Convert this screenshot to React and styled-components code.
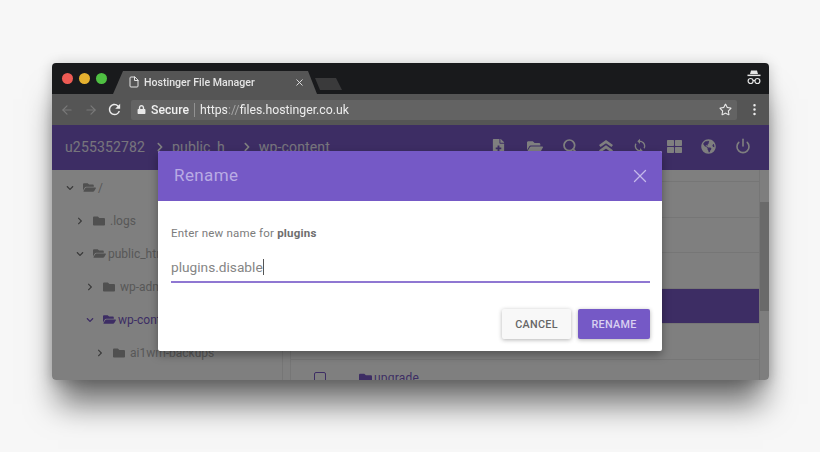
import React from 'react';
import styled, { createGlobalStyle } from 'styled-components';
import {
  FaChevronDown,
  FaChevronRight,
  FaFolder,
  FaFolderOpen,
  FaGlobeAmericas,
  FaLock,
  FaRegStar,
  FaThLarge,
  FaFileMedical,
} from 'react-icons/fa';
import { MdRefresh, MdSync } from 'react-icons/md';
import { FiArrowLeft, FiArrowRight, FiFile, FiPower, FiSearch, FiX, FiMoreVertical } from 'react-icons/fi';

const GlobalStyle = createGlobalStyle`
  html, body {
    margin: 0;
    padding: 0;
    background: #f7f7f7;
    font-family: Roboto, "Liberation Sans", sans-serif;
  }
`;

const Page = styled.div`
  width: 820px;
  height: 452px;
  padding: 63px 0 0 52px;
  box-sizing: border-box;
  overflow: hidden;
`;

const BrowserWindow = styled.div`
  width: 717px;
  height: 317px;
  display: flex;
  flex-direction: column;
  border-radius: 4px;
  overflow: hidden;
  filter: blur(0.4px);
`;

const Shadow = styled.div`
  width: 717px;
  height: 317px;
  border-radius: 4px;
  box-shadow: 0 30px 30px -6px rgba(0, 0, 0, 0.55), 0 2px 14px rgba(0, 0, 0, 0.22);
`;

const TabBar = styled.div`
  height: 31px;
  flex: none;
  display: flex;
  align-items: flex-end;
  padding-left: 10px;
  background: #191a1c;
  position: relative;
`;

const Light = styled.span`
  width: 11px;
  height: 11px;
  border-radius: 50%;
  margin-right: 6px;
  margin-bottom: 10px;
  background: ${({ $color }) => $color};
  flex: none;
`;

const Tab = styled.div`
  width: 204px;
  height: 23px;
  padding: 0 12px 1px 15px;
  box-sizing: border-box;
  display: flex;
  align-items: center;
  background: #555555;
  clip-path: polygon(0 100%, 10px 0, calc(100% - 9px) 0, 100% 100%);
  color: #e4e4e4;
  font-size: 10.6px;
  font-weight: 500;
  flex: none;
`;

const TabTitle = styled.span`
  margin-left: 4px;
  flex: 1;
  white-space: nowrap;
`;

const NewTab = styled.div`
  width: 27px;
  height: 12px;
  margin: 0 0 4px -2px;
  background: #3a3a3b;
  clip-path: polygon(0 0, 21px 0, 100% 100%, 5px 100%);
  flex: none;
`;

const Incognito = styled.svg`
  position: absolute;
  right: 8px;
  top: 7px;
`;

const Toolbar = styled.div`
  height: 31px;
  flex: none;
  display: flex;
  align-items: center;
  padding: 0 0 0 8px;
  background: #555555;
  color: #e8e8e8;
`;

const NavButton = styled.span`
  width: 24px;
  display: flex;
  justify-content: flex-start;
  color: ${({ $dim }) => ($dim ? '#797979' : '#ececec')};
  font-size: 14px;
`;

const ReloadButton = styled(NavButton)`
  margin-left: -2px;
  font-size: 17px;
`;

const Omnibox = styled.div`
  width: 606px;
  height: 20px;
  margin-left: 1px;
  padding: 0 5px 0 6px;
  box-sizing: border-box;
  display: flex;
  align-items: center;
  background: #636363;
  border-radius: 2px;
  font-size: 12.25px;
`;

const Secure = styled.span`
  margin-left: 5px;
  color: #f0f0f0;
  font-weight: 500;
`;

const Divider = styled.span`
  width: 1px;
  height: 14px;
  margin: 0 5px;
  background: #929292;
`;

const Url = styled.span`
  flex: 1;
  color: #ededed;
  white-space: nowrap;
`;

const Dim = styled.span`
  color: #a5a5a5;
`;

const MenuDots = styled.span`
  margin-left: 10px;
  display: flex;
  color: #ececec;
  font-size: 15px;
`;

const AppArea = styled.div`
  flex: 1;
  min-height: 0;
  position: relative;
  display: flex;
  flex-direction: column;
  background: #ffffff;
`;

const AppHeader = styled.div`
  height: 45px;
  flex: none;
  display: flex;
  align-items: flex-start;
  padding: 14px 18px 0 13px;
  box-sizing: border-box;
  background: #7a5bc9;
  color: #ffffff;
`;

const Crumbs = styled.div`
  flex: 1;
  display: flex;
  align-items: center;
  font-size: 14px;
  letter-spacing: 0.15px;
  color: #efeaf9;
`;

const CrumbSep = styled.span`
  display: flex;
  margin: ${({ $margin }) => $margin};
  font-size: 10px;
  color: #ffffff;
`;

const HeaderIcons = styled.div`
  display: grid;
  grid-template-columns: 37px 35px 36px 34px 34px 34px 35px 16px;
  margin-top: -3px;
  height: 20px;
`;

const HeaderIcon = styled.span`
  width: 16px;
  display: flex;
  align-items: center;
  justify-content: center;
  font-size: 15px;
`;

const Tree = styled.div`
  width: 230px;
  flex: none;
  padding-top: 1px;
  border-right: 1px solid #ececec;
`;

const Content = styled.div`
  flex: 1;
  min-height: 0;
  display: flex;
  overflow: hidden;
`;

const TreeRow = styled.div`
  height: 33px;
  display: flex;
  align-items: center;
  padding-left: ${({ $depth }) => 14 + $depth * 10}px;
  font-size: 12px;
  color: ${({ $active }) => ($active ? '#7a5bc9' : '#b0b0b0')};
  white-space: nowrap;
`;

const TreeArrow = styled.span`
  display: flex;
  width: 17px;
  font-size: 8px;
  color: ${({ $active }) => ($active ? '#7a5bc9' : '#777777')};
`;

const TreeFolder = styled.span`
  display: flex;
  margin-right: ${({ $open }) => ($open ? 2 : 5)}px;
  font-size: ${({ $open }) => ($open ? 13 : 12)}px;
  color: ${({ $active }) => ($active ? '#7a5bc9' : '#a0a0a0')};
`;

const Gutter = styled.div`
  width: 7px;
  flex: none;
  background: #ffffff;
  border-right: 1px solid #ececec;
`;

const List = styled.div`
  flex: 1;
  padding-top: 11px;
`;

const ListRow = styled.div`
  height: 35.5px;
  box-sizing: border-box;
  display: flex;
  align-items: center;
  padding: 3px 0 0 23px;
  border-top: 1px solid #ececec;
  background: ${({ $selected }) => ($selected ? '#7a5bc9' : 'transparent')};
  color: #7a5bc9;
  font-size: 12px;
  letter-spacing: 0.2px;
`;

const Checkbox = styled.span`
  width: 10px;
  height: 10px;
  border: 1.5px solid #7a5bc9;
  border-radius: 2px;
  flex: none;
`;

const RowFolder = styled.span`
  display: flex;
  margin: 0 2px 0 33px;
  font-size: 13px;
`;

const ScrollTrack = styled.div`
  width: 10px;
  flex: none;
  padding-top: 32px;
  background: #fdfdfd;
  border-left: 1px solid #ececec;
  box-sizing: border-box;
`;

const ScrollThumb = styled.div`
  height: 109px;
  background: #d4d4d4;
`;

const Overlay = styled.div`
  position: absolute;
  inset: 0;
  display: flex;
  justify-content: center;
  align-items: center;
  background: rgba(0, 0, 0, 0.5);
`;

const Modal = styled.div`
  width: 504px;
  height: 200px;
  margin: -3px 1px 0 0;
  display: flex;
  flex-direction: column;
  background: #ffffff;
  border-radius: 2px;
  box-shadow: 0 4px 10px rgba(0, 0, 0, 0.35);
  overflow: hidden;
`;

const ModalHeader = styled.div`
  height: 50px;
  flex: none;
  display: flex;
  align-items: center;
  justify-content: space-between;
  padding: 0 11px 2px 16px;
  box-sizing: border-box;
  background: #7559c6;
`;

const ModalTitle = styled.h2`
  margin: 0;
  font-size: 17px;
  font-weight: 400;
  letter-spacing: 0.4px;
  color: #b9abe4;
`;

const CloseButton = styled.span`
  display: flex;
  margin-top: 2px;
  font-size: 22px;
  color: #c4b8ea;
`;

const ModalBody = styled.div`
  flex: 1;
  display: flex;
  flex-direction: column;
  padding: 25px 12px 12px 13px;
`;

const Prompt = styled.p`
  margin: 0;
  font-size: 11.5px;
  line-height: 14px;
  letter-spacing: 0.2px;
  color: #7c7c7c;

  b {
    font-weight: 700;
    color: #6e6e6e;
  }
`;

const InputValue = styled.div`
  margin-top: 15px;
  height: 28px;
  box-sizing: border-box;
  display: flex;
  align-items: flex-start;
  padding-top: 4px;
  border-bottom: 2px solid #8f77d2;
  font-size: 13.7px;
  line-height: 17px;
  color: #858585;
`;

const Caret = styled.span`
  width: 1px;
  height: 16px;
  background: #555555;
`;

const Actions = styled.div`
  margin-top: auto;
  display: flex;
  justify-content: flex-end;
  gap: 7px;
`;

const Button = styled.button`
  width: ${({ $width }) => $width}px;
  height: 30px;
  padding: 0;
  border: none;
  border-radius: 2px;
  font-family: inherit;
  font-size: 10.8px;
  font-weight: 500;
  letter-spacing: 0.3px;
  background: ${({ $primary }) => ($primary ? '#7559c6' : '#f8f8f8')};
  color: ${({ $primary }) => ($primary ? '#d9d0f1' : '#666666')};
  box-shadow: 0 1px 4px rgba(0, 0, 0, 0.3);
`;

const treeRows = [
  { name: '/', depth: 0, open: true },
  { name: '.logs', depth: 1 },
  { name: 'public_html', depth: 1, open: true },
  { name: 'wp-admin', depth: 2 },
  { name: 'wp-content', depth: 2, open: true, active: true },
  { name: 'ai1wm-backups', depth: 3 },
];

const listRows = [
  { id: 1 },
  { id: 2 },
  { id: 3 },
  { id: 4, selected: true },
  { id: 5 },
  { id: 6, name: 'upgrade' },
];

const DoubleUp = () => (
  <svg width="18" height="14" viewBox="0 0 18 14" fill="none" stroke="currentColor" strokeWidth="3">
    <path d="M2 7l7-5 7 5" />
    <path d="M2 13l7-5 7 5" />
  </svg>
);

const App = () => (
  <Page>
    <GlobalStyle />
    <Shadow>
      <BrowserWindow>
        <TabBar>
          <Light $color="#ee5b54" />
          <Light $color="#e6b12f" />
          <Light $color="#4fc042" />
          <Tab>
            <FiFile size={12} />
            <TabTitle>Hostinger File Manager</TabTitle>
            <FiX size={11} />
          </Tab>
          <NewTab />
          <Incognito width="14" height="16" viewBox="0 0 14 16" fill="#e6e6e6">
            <path d="M4 0.5h6l1 3.5H3z" />
            <rect x="0.5" y="4.6" width="13" height="1.5" />
            <circle cx="3.6" cy="11" r="2.5" fill="none" stroke="#e6e6e6" strokeWidth="1.2" />
            <circle cx="10.4" cy="11" r="2.5" fill="none" stroke="#e6e6e6" strokeWidth="1.2" />
            <rect x="6" y="10" width="2" height="1.1" />
          </Incognito>
        </TabBar>
        <Toolbar>
          <NavButton $dim><FiArrowLeft /></NavButton>
          <NavButton $dim><FiArrowRight /></NavButton>
          <ReloadButton><MdRefresh /></ReloadButton>
          <Omnibox>
            <FaLock size={9} />
            <Secure>Secure</Secure>
            <Divider />
            <Url>https<Dim>://</Dim>files.hostinger.co.uk</Url>
            <FaRegStar size={13} />
          </Omnibox>
          <MenuDots><FiMoreVertical /></MenuDots>
        </Toolbar>
        <AppArea>
          <AppHeader>
            <Crumbs>
              u255352782
              <CrumbSep $margin="0 7px 0 10px"><FaChevronRight /></CrumbSep>
              public_h
              <CrumbSep $margin="0 7px 0 17px"><FaChevronRight /></CrumbSep>
              wp-content
            </Crumbs>
            <HeaderIcons>
              <HeaderIcon><FaFileMedical /></HeaderIcon>
              <HeaderIcon><FaFolderOpen size={17} /></HeaderIcon>
              <HeaderIcon><FiSearch size={16} strokeWidth={2.6} /></HeaderIcon>
              <HeaderIcon><DoubleUp /></HeaderIcon>
              <HeaderIcon><MdSync size={18} /></HeaderIcon>
              <HeaderIcon><FaThLarge /></HeaderIcon>
              <HeaderIcon><FaGlobeAmericas /></HeaderIcon>
              <HeaderIcon><FiPower size={16} strokeWidth={2.4} /></HeaderIcon>
            </HeaderIcons>
          </AppHeader>
          <Content>
            <Tree>
              {treeRows.map((row) => (
                <TreeRow key={row.name} $depth={row.depth} $active={row.active}>
                  <TreeArrow $active={row.active}>
                    {row.open ? <FaChevronDown /> : <FaChevronRight />}
                  </TreeArrow>
                  <TreeFolder $open={row.open} $active={row.active}>
                    {row.open ? <FaFolderOpen /> : <FaFolder />}
                  </TreeFolder>
                  {row.name}
                </TreeRow>
              ))}
            </Tree>
            <Gutter />
            <List>
              {listRows.map((row) => (
                <ListRow key={row.id} $selected={row.selected}>
                  {row.name && (
                    <>
                      <Checkbox />
                      <RowFolder><FaFolder /></RowFolder>
                      {row.name}
                    </>
                  )}
                </ListRow>
              ))}
            </List>
            <ScrollTrack>
              <ScrollThumb />
            </ScrollTrack>
          </Content>
          <Overlay>
            <Modal>
              <ModalHeader>
                <ModalTitle>Rename</ModalTitle>
                <CloseButton><FiX strokeWidth={1.4} /></CloseButton>
              </ModalHeader>
              <ModalBody>
                <Prompt>Enter new name for <b>plugins</b></Prompt>
                <InputValue>plugins.disable<Caret /></InputValue>
                <Actions>
                  <Button $width={69}>CANCEL</Button>
                  <Button $width={72} $primary>RENAME</Button>
                </Actions>
              </ModalBody>
            </Modal>
          </Overlay>
        </AppArea>
      </BrowserWindow>
    </Shadow>
  </Page>
);

export default App;
